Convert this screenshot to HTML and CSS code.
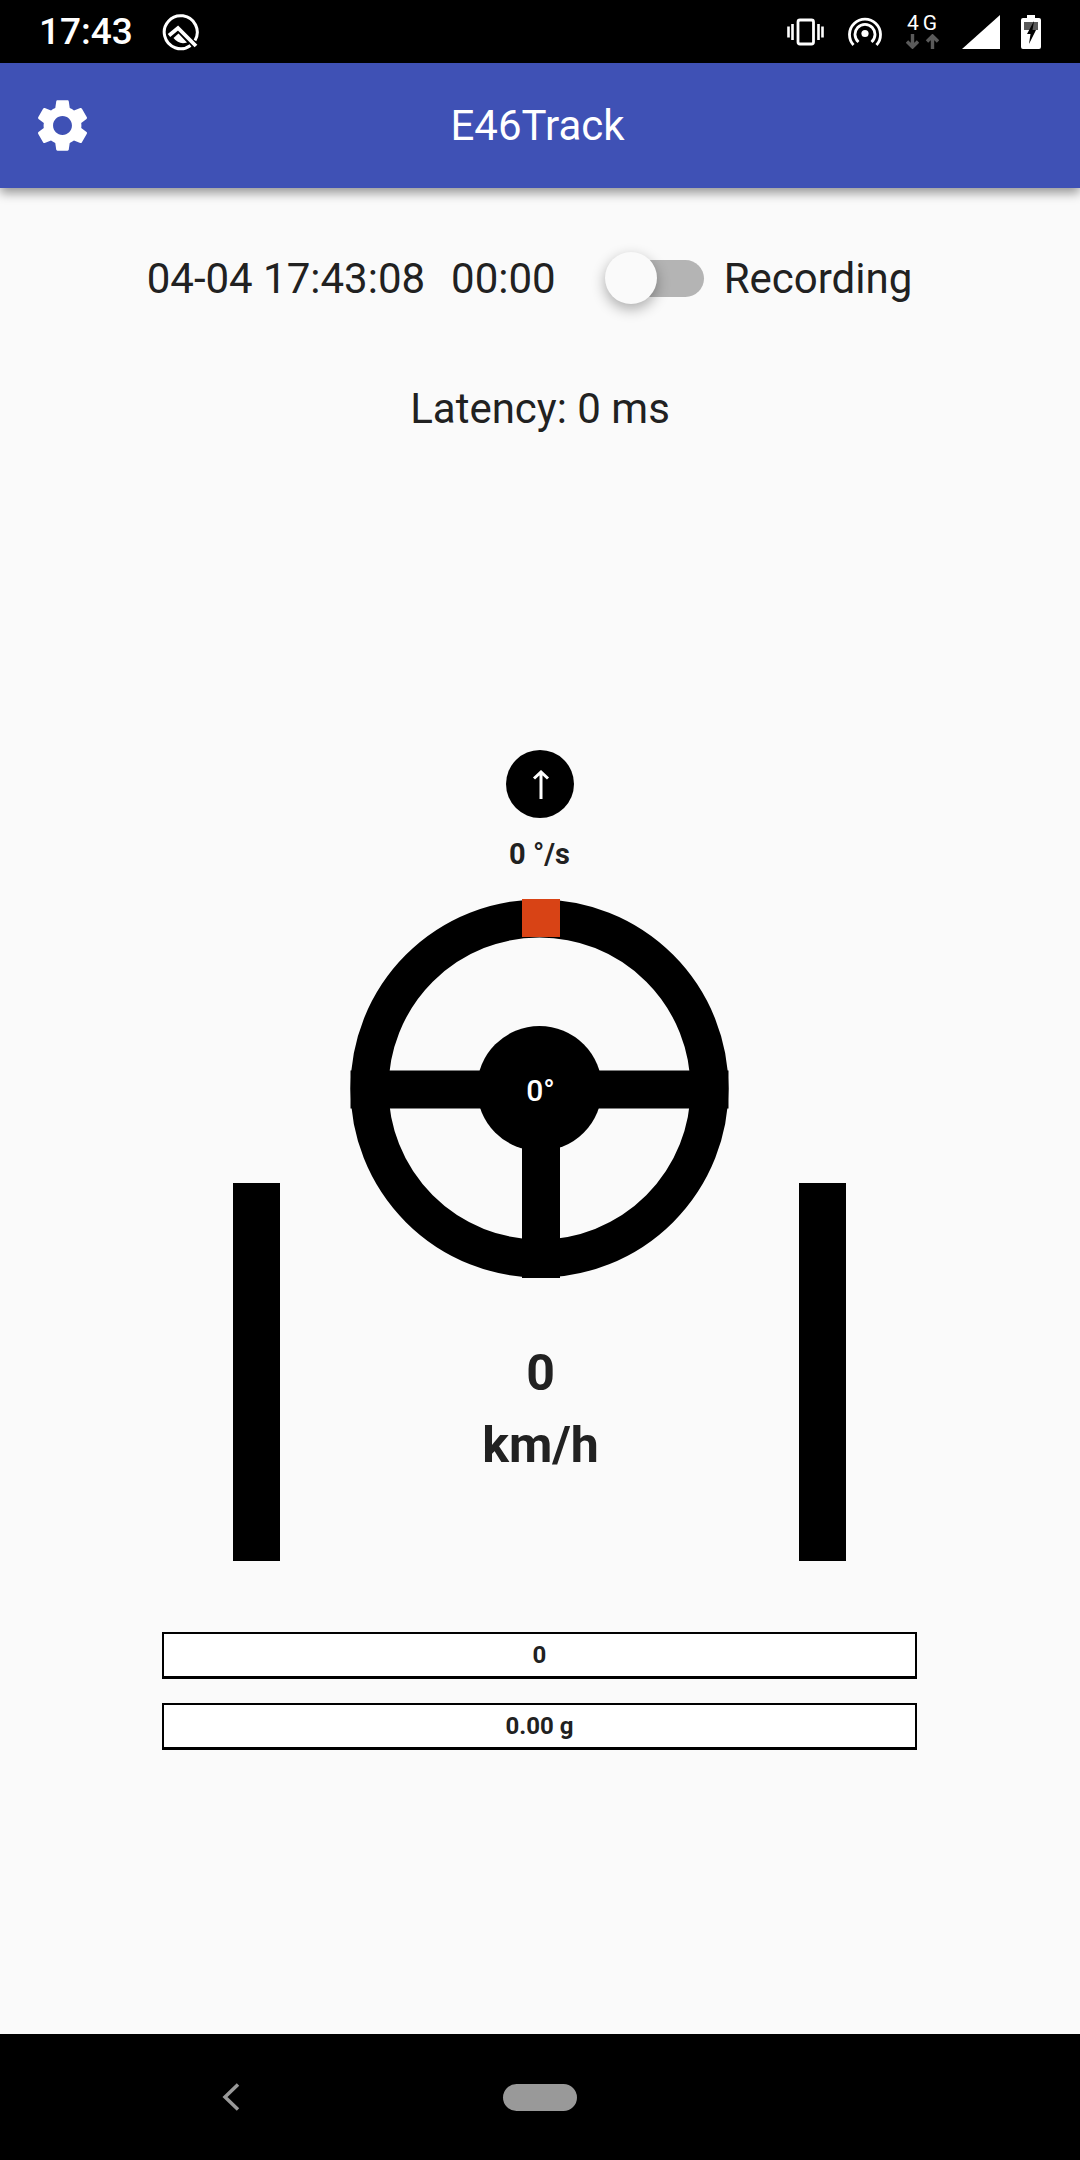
FILE: index.html
```html
<!DOCTYPE html>
<html lang="en">
<head>
  <meta charset="UTF-8" />
  <title>E46Track</title>
  <link rel="stylesheet" href="styles.css">
</head>
<body>

  <div class="status-bar">
    <span class="clock">17:43</span>
    <svg class="q-icon" width="38" height="38" viewBox="0 0 38 38">
      <path d="M28.500 32.500A16.500 16.500 0 1 1 33 27.500" fill="none" stroke="#fff" stroke-width="3"/>
      <path d="M7 22.500L16 15 34 33" fill="none" stroke="#fff" stroke-width="3.800"/>
      <path d="M11.500 25L16.500 20.500 25 29.500Q17 32 11.500 25Z" fill="#fff"/>
    </svg>
    <div class="status-right">
      <svg width="37" height="28" viewBox="0 0 37 28">
        <rect x="11" y="2" width="15.500" height="24" rx="2" fill="none" stroke="#fff" stroke-width="2.800"/>
        <path d="M5.500 6v16M1.500 8.500v11M31.500 6v16M35.500 8.500v11" stroke="#fff" stroke-width="2.600"/>
      </svg>
      <svg width="34" height="30" viewBox="0 0 34 30">
        <circle cx="17" cy="16.500" r="3.600" fill="#fff"/>
        <path d="M10.500 25a10 10 0 1 1 13 0M5.500 28a15.500 15.500 0 1 1 23 0" fill="none" stroke="#fff" stroke-width="2.800"/>
      </svg>
      <div class="net">
        <span class="net-label">4G</span>
        <svg width="33" height="15" viewBox="0 0 33 15">
          <path d="M6.500 0v12M1 7.500L6.500 13 12 7.500M26.500 15V3M21 7.500L26.500 2 32 7.500" fill="none" stroke="#5a5a5a" stroke-width="3.400"/>
        </svg>
      </div>
      <svg class="signal" width="38" height="34" viewBox="0 0 38 34"><path d="M0 34L38 0V34Z" fill="#fff"/></svg>
      <svg width="20" height="34" viewBox="0 0 20 34">
        <path d="M6 0h8v3h4a2 2 0 0 1 2 2v27a2 2 0 0 1-2 2H2a2 2 0 0 1-2-2V5a2 2 0 0 1 2-2h4z" fill="#fff"/>
        <path d="M3 7h14v8H3z" fill="#5a5a5a"/>
        <path d="M13 6L6 19h3.500L8 29l7-14h-3.500L13 6z" fill="#000"/>
      </svg>
    </div>
  </div>

  <header class="app-bar">
    <svg class="gear" width="63" height="63" viewBox="0 0 24 24">
      <path fill="#fff" d="M19.14 12.94c.04-.3.06-.61.06-.94 0-.32-.02-.64-.07-.94l2.03-1.58c.18-.14.23-.41.12-.61l-1.92-3.32c-.12-.22-.37-.29-.59-.22l-2.39.96c-.5-.38-1.03-.7-1.62-.94l-.36-2.54c-.04-.24-.24-.41-.48-.41h-3.84c-.24 0-.43.17-.47.41l-.36 2.54c-.59.24-1.13.57-1.62.94l-2.39-.96c-.22-.08-.47 0-.59.22L2.74 8.87c-.12.21-.08.47.12.61l2.03 1.58c-.05.3-.09.63-.09.94s.02.64.07.94l-2.03 1.58c-.18.14-.23.41-.12.61l1.92 3.32c.12.22.37.29.59.22l2.39-.96c.5.38 1.03.7 1.62.94l.36 2.54c.05.24.24.41.48.41h3.84c.24 0 .44-.17.47-.41l.36-2.54c.59-.24 1.13-.56 1.62-.94l2.39.96c.22.08.47 0 .59-.22l1.92-3.32c.12-.22.07-.47-.12-.61l-2.01-1.58zM12 15.6c-1.98 0-3.6-1.62-3.6-3.6s1.62-3.6 3.6-3.6 3.6 1.62 3.6 3.6-1.62 3.6-3.6 3.6z"/>
    </svg>
    <h1 class="title">E46Track</h1>
  </header>

  <main class="content">
    <div class="info-row">
      <span class="date">04-04 17:43:08</span>
      <span class="elapsed">00:00</span>
      <div class="switch"><div class="switch-track"></div><div class="switch-thumb"></div></div>
      <span class="rec-label">Recording</span>
    </div>

    <div class="latency">Latency: 0 ms</div>

    <div class="gauges">
      <div class="pedal"></div>
      <div class="center">
        <div class="arrow-dot">
          <svg class="arrow" width="18" height="29" viewBox="0 0 18 29">
            <path d="M9 29V2M2 8.500L9 2l7 6.500" fill="none" stroke="#fff" stroke-width="3"/>
          </svg>
        </div>
        <div class="rate">0 °/s</div>
        <div class="wheel">
          <svg width="379" height="379" viewBox="0 0 379 379">
            <circle cx="189.5" cy="189.5" r="170" fill="none" stroke="#000" stroke-width="38"/>
            <circle cx="189.5" cy="189.5" r="62.5" fill="#000"/>
            <rect x="0.5" y="171.500" width="378" height="38" fill="#000"/>
            <rect x="172" y="189" width="38" height="190" fill="#000"/>
            <rect x="172" y="0" width="38" height="38" fill="#d84315"/>
          </svg>
          <span class="wheel-angle">0°</span>
        </div>
        <div class="speed">0</div>
        <div class="speed">km/h</div>
      </div>
      <div class="pedal"></div>
    </div>

    <div class="meters">
      <div class="meter">0</div>
      <div class="meter">0.00 g</div>
    </div>
  </main>

  <nav class="nav-bar">
    <svg width="18" height="28" viewBox="0 0 18 28">
      <path d="M16 1.500L3 14l13 12.500" fill="none" stroke="#999" stroke-width="3.500"/>
    </svg>
    <div class="home-pill"></div>
  </nav>

</body>
</html>
```

FILE: styles.css
```css
* {
  box-sizing: border-box;
}
body {
  margin: 0;
  width: 1080px;
  height: 2160px;
  display: flex;
  flex-direction: column;
  background-color: #fafafa;
  color: #212121;
  font-family: Roboto, sans-serif;
  overflow: hidden;
}

.status-bar {
  height: 63px;
  background-color: black;
  color: white;
  display: flex;
  align-items: center;
  padding: 0 39px 0 39px;
}
.clock {
  font-size: 37px;
  font-weight: 500;
}
.q-icon {
  margin-left: 29px;
}
.status-right {
  margin-left: auto;
  display: flex;
  align-items: center;
  gap: 24px;
}
.net {
  display: flex;
  flex-direction: column;
  align-items: center;
  gap: 2px;
}
.net-label {
  font-size: 21px;
  line-height: 17px;
  letter-spacing: 4px;
  margin-right: -3px;
}
.signal {
  margin-left: -1px;
  margin-right: -3px;
}

.app-bar {
  height: 125px;
  background-color: #3f51b5;
  color: white;
  position: relative;
  display: flex;
  align-items: center;
  justify-content: center;
  padding-right: 5px;
  box-shadow: 0 5px 10px rgba(0, 0, 0, 0.4);
}
.gear {
  position: absolute;
  left: 31px;
  top: 31px;
}
.title {
  margin: 0;
  font-size: 42px;
  font-weight: 400;
}

.content {
  flex: 1;
  display: flex;
  flex-direction: column;
  align-items: center;
}
.info-row {
  display: flex;
  align-items: center;
  margin-top: 64px;
  height: 52px;
  padding-right: 21px;
  font-size: 42px;
}
.elapsed {
  margin-left: 26px;
}
.switch {
  position: relative;
  width: 99px;
  height: 52px;
  margin-left: 49px;
  margin-right: 20px;
}
.switch-track {
  position: absolute;
  left: 8px;
  right: 0;
  top: 8px;
  height: 37px;
  border-radius: 19px;
  background-color: #b4b4b4;
}
.switch-thumb {
  position: absolute;
  left: 0;
  top: 0;
  width: 52px;
  height: 52px;
  border-radius: 50%;
  background-color: #fafafa;
  box-shadow: 0 5px 14px rgba(0, 0, 0, 0.32);
}
.latency {
  margin-top: 80px;
  font-size: 42px;
  line-height: 50px;
}

.gauges {
  display: flex;
  align-items: flex-end;
  margin-top: 316px;
  margin-right: 1px;
}
.pedal {
  width: 47px;
  height: 378px;
  background-color: black;
}
.center {
  width: 519px;
  display: flex;
  flex-direction: column;
  align-items: center;
}
.arrow-dot {
  width: 68px;
  height: 68px;
  border-radius: 50%;
  background-color: black;
  display: flex;
  align-items: center;
  justify-content: center;
}
.arrow {
  margin-left: 3px;
}
.rate {
  margin-top: 18px;
  font-size: 29px;
  font-weight: 700;
  line-height: 36px;
}
.wheel {
  position: relative;
  width: 379px;
  height: 379px;
  margin-top: 27px;
}
.wheel svg {
  display: block;
}
.wheel-angle {
  position: absolute;
  left: 2px;
  right: 0;
  top: 174px;
  text-align: center;
  color: white;
  font-size: 30px;
  font-weight: 500;
  line-height: 36px;
}
.speed {
  margin-left: 2px;
  font-size: 50px;
  font-weight: 700;
  line-height: 72px;
}
.wheel + .speed {
  margin-top: 59px;
}
.center .speed:last-child {
  margin-bottom: 80px;
}

.meters {
  display: flex;
  flex-direction: column;
  gap: 24px;
  margin-top: 71px;
  margin-right: 1px;
}
.meter {
  width: 755px;
  height: 47px;
  border: 2px solid black;
  border-bottom-width: 3px;
  background-color: white;
  text-align: center;
  font-size: 24px;
  font-weight: 700;
  line-height: 42px;
}

.nav-bar {
  height: 126px;
  background-color: black;
  position: relative;
  display: flex;
  align-items: center;
  justify-content: center;
}
.nav-bar svg {
  position: absolute;
  left: 222px;
  top: 49px;
}
.home-pill {
  width: 74px;
  height: 27px;
  border-radius: 14px;
  background-color: #999;
}
```
